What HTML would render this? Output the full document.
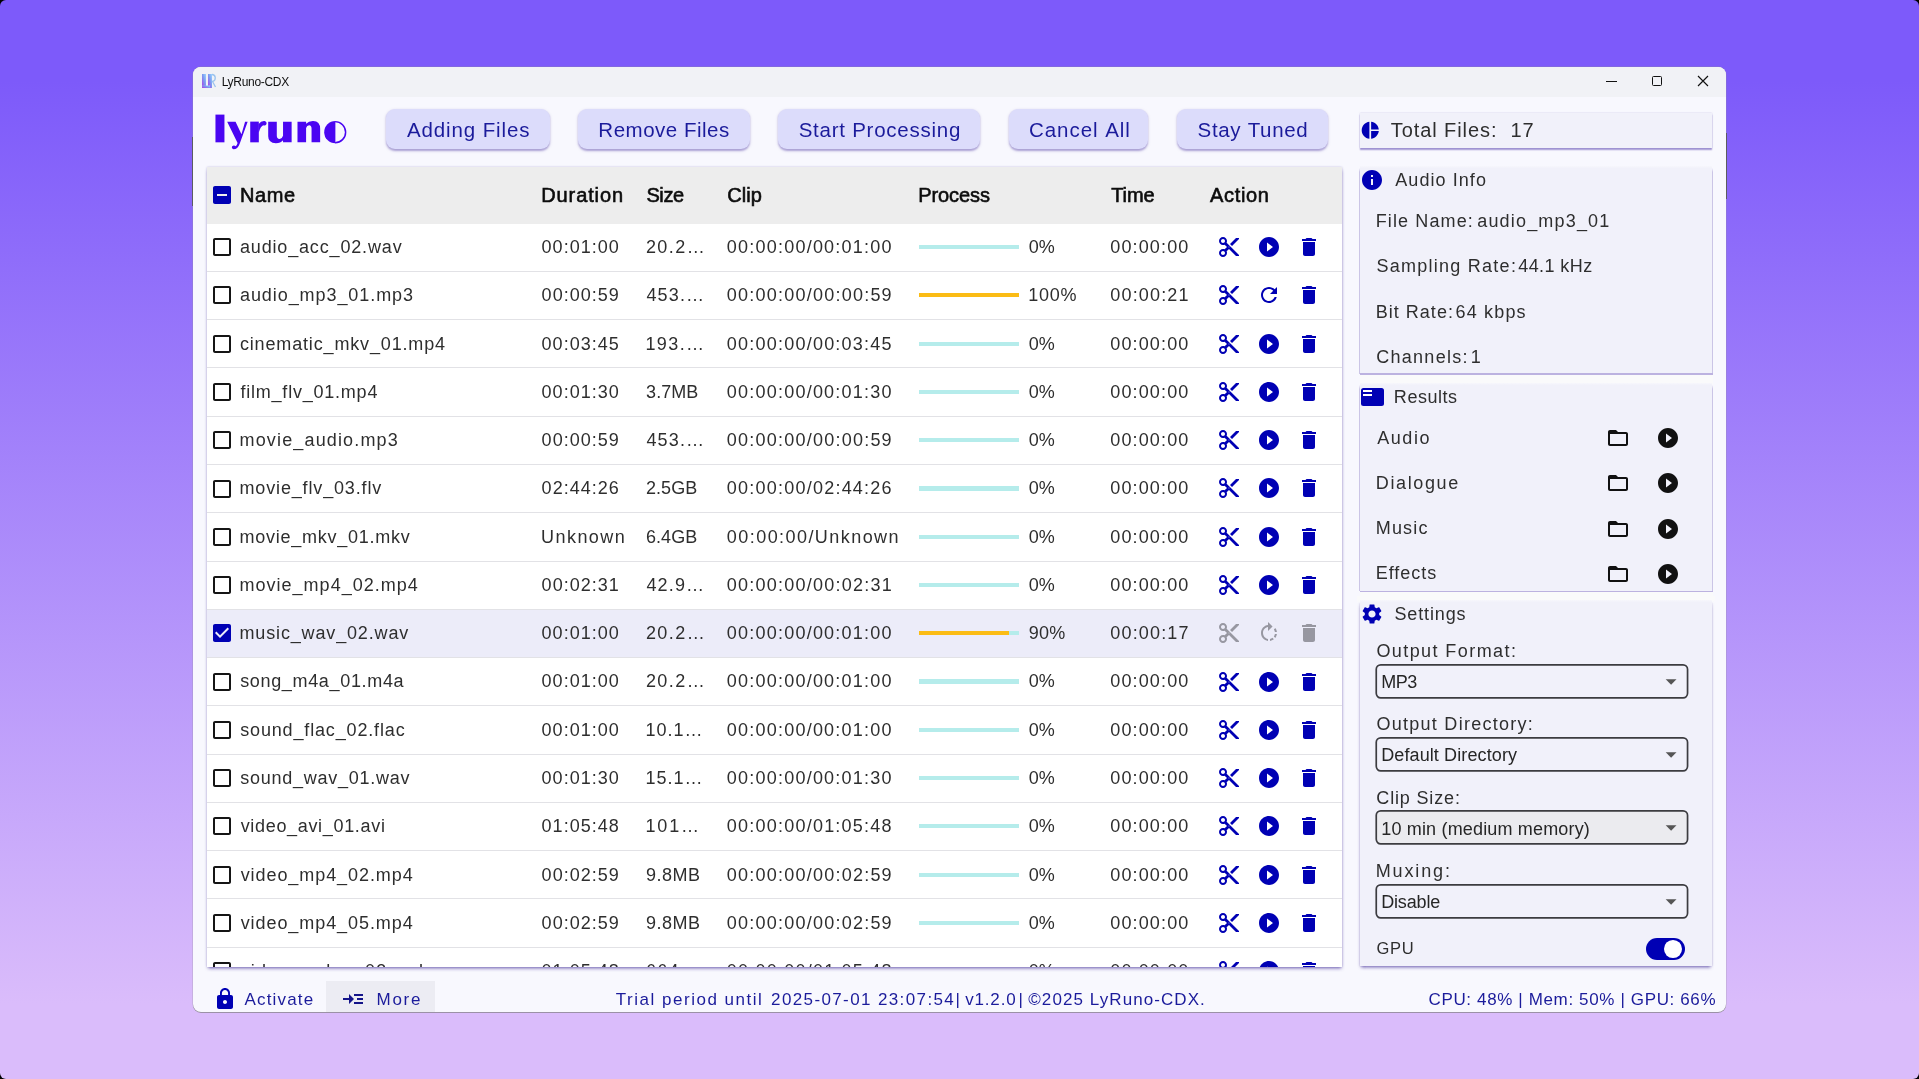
<!DOCTYPE html>
<html><head><meta charset="utf-8"><title>LyRuno-CDX</title>
<style>
html,body{margin:0;padding:0;background:#000;}
body{width:1919px;height:1079px;overflow:hidden;position:relative;font-family:"Liberation Sans",sans-serif;}
#bg{position:absolute;left:0;top:0;width:1919px;height:1079px;border-radius:6px;
background:linear-gradient(180deg,#7d5afa 0%,#7d5afa 7.5%,#dabcfb 93%,#dabcfb 100%);}
#win{position:absolute;background:#f8f8fe;border-radius:8px;box-shadow:0 0.8px 0 0 rgba(120,120,120,.75),0 0 0 0.5px rgba(150,150,150,.5);}
#tbl{position:absolute;background:#fff;overflow:hidden;box-shadow:0 2px 3.5px -0.5px rgba(80,60,160,.78),0 0 2px rgba(140,130,190,.38);}
.t{position:absolute;white-space:nowrap;}
.b{position:absolute;}
.i{position:absolute;display:block;}
#root{position:absolute;left:0;top:0;width:1919px;height:1079px;will-change:transform;}
</style></head><body><div id="bg"></div><div id="root">
<div id="win" style="left:193px;top:67px;width:1533px;height:945px"></div>
<div class="b" style="left:193.00px;top:67.00px;width:1533.00px;height:30.00px;background:#f1f2f6;border-radius:8px 8px 0 0;"></div>
<div class="b" style="left:1725.60px;top:133.30px;width:1.00px;height:66.00px;background:#5c5c60;"></div>
<div class="b" style="left:192.40px;top:136.70px;width:1.00px;height:69.00px;background:#5c5c60;"></div>
<svg class="i" style="left:201px;top:73px" width="16" height="16" viewBox="0 0 16 16">
<defs><linearGradient id="lg" x1="0" y1="1" x2="1" y2="0"><stop offset="0" stop-color="#b238e8"/><stop offset="0.55" stop-color="#7c9cf0"/><stop offset="1" stop-color="#9fd8ff"/></linearGradient></defs>
<rect x="1" y="1" width="4" height="14" fill="url(#lg)"/><rect x="7" y="1" width="4" height="14" fill="url(#lg)"/><rect x="1" y="12.5" width="8" height="2.500" fill="url(#lg)"/>
<path d="M11 1.5c4 0 4.500 6 0.500 7l3 5.500" stroke="#9cc4ee" stroke-width="1.300" fill="none"/></svg>
<div class="t" style="left:221.64px;top:76.00px;font-size:12px;line-height:12px;color:#111;letter-spacing:-0.296px;">LyRuno-CDX</div>
<div class="b" style="left:1606.00px;top:81.00px;width:11.00px;height:1.00px;background:#111;"></div>
<div class="b" style="left:1651.50px;top:75.70px;width:10.00px;height:10.00px;border:1.2px solid #111;border-radius:1.5px;box-sizing:border-box;"></div>
<svg class="i" style="left:1697px;top:75px" width="12" height="12" viewBox="0 0 12 12"><path d="M1 1L11 11M11 1L1 11" stroke="#111" stroke-width="1.15" fill="none"/></svg>
<svg class="i" style="left:208px;top:106px" width="150" height="50" viewBox="0 0 1919 640">
<g fill="#4a05f2">
<path d="M95 110H210V465H95Z"/>
<path d="M245 200H352L428 360L474 200H507L405 482Q380 554 326 554Q296 543 309 515Q332 497 355 516Q369 504 378 474Z"/>
<path d="M540 200H650V465H540Z"/>
<path d="M645 232Q680 189 723 193Q757 204 747 235Q732 257 706 247Q672 263 651 335L645 335Z"/>
<path d="M770 200H880V378Q880 422 916 422Q950 416 960 380V200H1070V465H960V438Q930 476 868 476Q770 474 770 388Z"/>
<path d="M1145 200H1255V228Q1290 190 1346 192Q1435 196 1435 292V465H1325V292Q1325 246 1294 246Q1265 250 1255 282V465H1145Z"/>
<path d="M1630 192A143 143 0 0 0 1630 478Z"/>
</g>
<path d="M1626 200A135 135 0 0 1 1626 470" stroke="#4a05f2" stroke-width="19" fill="none"/>
</svg>
<div class="b" style="left:385.60px;top:109.40px;width:164.70px;height:39.80px;background:#dcdcfb;border-radius:9px;box-shadow:0 1.5px 2.2px rgba(90,70,170,.5);"></div>
<div class="t" style="left:407.00px;top:120.00px;font-size:20.5px;line-height:20.5px;color:#1b1b9b;letter-spacing:0.874px;">Adding&nbsp;Files</div>
<div class="b" style="left:578.40px;top:109.40px;width:171.70px;height:39.80px;background:#dcdcfb;border-radius:9px;box-shadow:0 1.5px 2.2px rgba(90,70,170,.5);"></div>
<div class="t" style="left:598.36px;top:120.00px;font-size:20.5px;line-height:20.5px;color:#1b1b9b;letter-spacing:0.505px;">Remove&nbsp;Files</div>
<div class="b" style="left:778.30px;top:109.40px;width:202.00px;height:39.80px;background:#dcdcfb;border-radius:9px;box-shadow:0 1.5px 2.2px rgba(90,70,170,.5);"></div>
<div class="t" style="left:798.68px;top:120.00px;font-size:20.5px;line-height:20.5px;color:#1b1b9b;letter-spacing:0.749px;">Start&nbsp;Processing</div>
<div class="b" style="left:1008.60px;top:109.40px;width:139.90px;height:39.80px;background:#dcdcfb;border-radius:9px;box-shadow:0 1.5px 2.2px rgba(90,70,170,.5);"></div>
<div class="t" style="left:1028.97px;top:120.00px;font-size:20.5px;line-height:20.5px;color:#1b1b9b;letter-spacing:0.954px;">Cancel&nbsp;All</div>
<div class="b" style="left:1176.70px;top:109.40px;width:151.30px;height:39.80px;background:#dcdcfb;border-radius:9px;box-shadow:0 1.5px 2.2px rgba(90,70,170,.5);"></div>
<div class="t" style="left:1197.58px;top:120.00px;font-size:20.5px;line-height:20.5px;color:#1b1b9b;letter-spacing:0.669px;">Stay&nbsp;Tuned</div>
<div id="tbl" style="left:207px;top:167px;width:1135px;height:799.6px">
<div style="position:absolute;left:-207px;top:-167px;width:1919px;height:1079px">
<div class="b" style="left:207.00px;top:167.00px;width:1135.00px;height:56.70px;background:#ededed;"></div>
<svg class="i" style="left:210.40px;top:182.70px" width="24" height="24" viewBox="0 0 24 24"><path fill="#0000b4" d="M19 3H5c-1.1 0-2 .9-2 2v14c0 1.1.9 2 2 2h14c1.1 0 2-.9 2-2V5c0-1.1-.9-2-2-2zm-2 10H7v-2h10v2z"/></svg>
<div class="t" style="left:239.90px;top:185.00px;font-size:20px;line-height:20px;color:#0c0c0c;letter-spacing:0.667px;-webkit-text-stroke:0.6px #0c0c0c;">Name</div>
<div class="t" style="left:541.30px;top:185.00px;font-size:20px;line-height:20px;color:#0c0c0c;letter-spacing:0.879px;-webkit-text-stroke:0.6px #0c0c0c;">Duration</div>
<div class="t" style="left:646.40px;top:185.00px;font-size:20px;line-height:20px;color:#0c0c0c;letter-spacing:-0.383px;-webkit-text-stroke:0.6px #0c0c0c;">Size</div>
<div class="t" style="left:727.20px;top:185.00px;font-size:20px;line-height:20px;color:#0c0c0c;letter-spacing:0.117px;-webkit-text-stroke:0.6px #0c0c0c;">Clip</div>
<div class="t" style="left:918.30px;top:185.00px;font-size:20px;line-height:20px;color:#0c0c0c;letter-spacing:-0.108px;-webkit-text-stroke:0.6px #0c0c0c;">Process</div>
<div class="t" style="left:1111.20px;top:185.00px;font-size:20px;line-height:20px;color:#0c0c0c;letter-spacing:-0.050px;-webkit-text-stroke:0.6px #0c0c0c;">Time</div>
<div class="t" style="left:1209.90px;top:185.00px;font-size:20px;line-height:20px;color:#0c0c0c;letter-spacing:0.700px;-webkit-text-stroke:0.6px #0c0c0c;">Action</div>
<div class="b" style="left:207.00px;top:270.95px;width:1135.00px;height:1.00px;background:#e2e2e6;"></div>
<svg class="i" style="left:210.30px;top:235.20px" width="24" height="24" viewBox="0 0 24 24"><path fill="#151515" d="M19 5v14H5V5h14m0-2H5c-1.1 0-2 .9-2 2v14c0 1.1.9 2 2 2h14c1.1 0 2-.9 2-2V5c0-1.1-.9-2-2-2z"/></svg>
<div class="t" style="left:239.94px;top:238.00px;font-size:18px;line-height:18px;color:#2e2e2e;letter-spacing:0.839px;">audio_acc_02.wav</div>
<div class="t" style="left:541.62px;top:238.00px;font-size:18px;line-height:18px;color:#2e2e2e;letter-spacing:0.998px;">00:01:00</div>
<div class="t" style="left:645.90px;top:238.00px;font-size:18px;line-height:18px;color:#2e2e2e;letter-spacing:1.469px;">20.2…</div>
<div class="t" style="left:726.83px;top:238.00px;font-size:18px;line-height:18px;color:#2e2e2e;letter-spacing:1.220px;">00:00:00/00:01:00</div>
<div class="b" style="left:919.00px;top:245.00px;width:100.00px;height:4.20px;background:#b5eceb;"></div>
<div class="t" style="left:1028.83px;top:238.00px;font-size:18px;line-height:18px;color:#2e2e2e;letter-spacing:-0.105px;">0%</div>
<div class="t" style="left:1110.33px;top:238.00px;font-size:18px;line-height:18px;color:#2e2e2e;letter-spacing:1.126px;">00:00:00</div>
<svg class="i" style="left:1217.00px;top:235.10px" width="24" height="24" viewBox="0 0 24 24"><path fill="#0000b4" d="M9.64 7.64c.23-.5.36-1.05.36-1.64 0-2.21-1.79-4-4-4S2 3.79 2 6s1.79 4 4 4c.59 0 1.14-.13 1.64-.36L10 12l-2.36 2.36C7.14 14.13 6.59 14 6 14c-2.21 0-4 1.79-4 4s1.79 4 4 4 4-1.79 4-4c0-.59-.13-1.14-.36-1.64L12 14l7 7h3v-1L9.64 7.64zM6 8c-1.1 0-2-.89-2-2s.9-2 2-2 2 .89 2 2-.9 2-2 2zm0 12c-1.1 0-2-.89-2-2s.9-2 2-2 2 .89 2 2-.9 2-2 2zm6-7.5c-.28 0-.5-.22-.5-.5s.22-.5.5-.5.5.22.5.5-.22.5-.5.5zM19 3l-6 6 2 2 7-7V3z"/></svg>
<svg class="i" style="left:1257.00px;top:235.10px" width="24" height="24" viewBox="0 0 24 24"><path fill="#0000b4" d="M12 2C6.48 2 2 6.48 2 12s4.48 10 10 10 10-4.48 10-10S17.52 2 12 2zm-2 14.5v-9l6 4.5-6 4.5z"/></svg>
<svg class="i" style="left:1297.20px;top:235.10px" width="24" height="24" viewBox="0 0 24 24"><path fill="#0000b4" d="M6 19c0 1.1.9 2 2 2h8c1.1 0 2-.9 2-2V7H6v12zM19 4h-3.5l-1-1h-5l-1 1H5v2h14V4z"/></svg>
<div class="b" style="left:207.00px;top:319.22px;width:1135.00px;height:1.00px;background:#e2e2e6;"></div>
<svg class="i" style="left:210.30px;top:283.47px" width="24" height="24" viewBox="0 0 24 24"><path fill="#151515" d="M19 5v14H5V5h14m0-2H5c-1.1 0-2 .9-2 2v14c0 1.1.9 2 2 2h14c1.1 0 2-.9 2-2V5c0-1.1-.9-2-2-2z"/></svg>
<div class="t" style="left:239.94px;top:286.00px;font-size:18px;line-height:18px;color:#2e2e2e;letter-spacing:0.934px;">audio_mp3_01.mp3</div>
<div class="t" style="left:541.62px;top:286.00px;font-size:18px;line-height:18px;color:#2e2e2e;letter-spacing:1.017px;">00:00:59</div>
<div class="t" style="left:646.39px;top:286.00px;font-size:18px;line-height:18px;color:#2e2e2e;letter-spacing:1.170px;">453.…</div>
<div class="t" style="left:726.83px;top:286.00px;font-size:18px;line-height:18px;color:#2e2e2e;letter-spacing:1.229px;">00:00:00/00:00:59</div>
<div class="b" style="left:919.00px;top:293.27px;width:100.00px;height:4.20px;background:#b5eceb;"></div>
<div class="b" style="left:919.00px;top:293.27px;width:100.00px;height:4.20px;background:#fbbc15;"></div>
<div class="t" style="left:1028.15px;top:286.00px;font-size:18px;line-height:18px;color:#2e2e2e;letter-spacing:0.748px;">100%</div>
<div class="t" style="left:1110.33px;top:286.00px;font-size:18px;line-height:18px;color:#2e2e2e;letter-spacing:1.152px;">00:00:21</div>
<svg class="i" style="left:1217.00px;top:283.37px" width="24" height="24" viewBox="0 0 24 24"><path fill="#0000b4" d="M9.64 7.64c.23-.5.36-1.05.36-1.64 0-2.21-1.79-4-4-4S2 3.79 2 6s1.79 4 4 4c.59 0 1.14-.13 1.64-.36L10 12l-2.36 2.36C7.14 14.13 6.59 14 6 14c-2.21 0-4 1.79-4 4s1.79 4 4 4 4-1.79 4-4c0-.59-.13-1.14-.36-1.64L12 14l7 7h3v-1L9.64 7.64zM6 8c-1.1 0-2-.89-2-2s.9-2 2-2 2 .89 2 2-.9 2-2 2zm0 12c-1.1 0-2-.89-2-2s.9-2 2-2 2 .89 2 2-.9 2-2 2zm6-7.5c-.28 0-.5-.22-.5-.5s.22-.5.5-.5.5.22.5.5-.22.5-.5.5zM19 3l-6 6 2 2 7-7V3z"/></svg>
<svg class="i" style="left:1257.00px;top:283.37px" width="24" height="24" viewBox="0 0 24 24"><path fill="#0000b4" d="M17.65 6.35C16.2 4.9 14.21 4 12 4c-4.42 0-7.99 3.58-7.99 8s3.57 8 7.99 8c3.73 0 6.84-2.55 7.73-6h-2.08c-.82 2.33-3.04 4-5.65 4-3.31 0-6-2.69-6-6s2.69-6 6-6c1.66 0 3.14.69 4.22 1.78L13 11h7V4l-2.35 2.35z"/></svg>
<svg class="i" style="left:1297.20px;top:283.37px" width="24" height="24" viewBox="0 0 24 24"><path fill="#0000b4" d="M6 19c0 1.1.9 2 2 2h8c1.1 0 2-.9 2-2V7H6v12zM19 4h-3.5l-1-1h-5l-1 1H5v2h14V4z"/></svg>
<div class="b" style="left:207.00px;top:367.49px;width:1135.00px;height:1.00px;background:#e2e2e6;"></div>
<svg class="i" style="left:210.30px;top:331.74px" width="24" height="24" viewBox="0 0 24 24"><path fill="#151515" d="M19 5v14H5V5h14m0-2H5c-1.1 0-2 .9-2 2v14c0 1.1.9 2 2 2h14c1.1 0 2-.9 2-2V5c0-1.1-.9-2-2-2z"/></svg>
<div class="t" style="left:239.94px;top:335.00px;font-size:18px;line-height:18px;color:#2e2e2e;letter-spacing:0.843px;">cinematic_mkv_01.mp4</div>
<div class="t" style="left:541.62px;top:335.00px;font-size:18px;line-height:18px;color:#2e2e2e;letter-spacing:1.004px;">00:03:45</div>
<div class="t" style="left:645.45px;top:335.00px;font-size:18px;line-height:18px;color:#2e2e2e;letter-spacing:1.406px;">193.…</div>
<div class="t" style="left:726.83px;top:335.00px;font-size:18px;line-height:18px;color:#2e2e2e;letter-spacing:1.223px;">00:00:00/00:03:45</div>
<div class="b" style="left:919.00px;top:341.54px;width:100.00px;height:4.20px;background:#b5eceb;"></div>
<div class="t" style="left:1028.83px;top:335.00px;font-size:18px;line-height:18px;color:#2e2e2e;letter-spacing:-0.105px;">0%</div>
<div class="t" style="left:1110.33px;top:335.00px;font-size:18px;line-height:18px;color:#2e2e2e;letter-spacing:1.126px;">00:00:00</div>
<svg class="i" style="left:1217.00px;top:331.64px" width="24" height="24" viewBox="0 0 24 24"><path fill="#0000b4" d="M9.64 7.64c.23-.5.36-1.05.36-1.64 0-2.21-1.79-4-4-4S2 3.79 2 6s1.79 4 4 4c.59 0 1.14-.13 1.64-.36L10 12l-2.36 2.36C7.14 14.13 6.59 14 6 14c-2.21 0-4 1.79-4 4s1.79 4 4 4 4-1.79 4-4c0-.59-.13-1.14-.36-1.64L12 14l7 7h3v-1L9.64 7.64zM6 8c-1.1 0-2-.89-2-2s.9-2 2-2 2 .89 2 2-.9 2-2 2zm0 12c-1.1 0-2-.89-2-2s.9-2 2-2 2 .89 2 2-.9 2-2 2zm6-7.5c-.28 0-.5-.22-.5-.5s.22-.5.5-.5.5.22.5.5-.22.5-.5.5zM19 3l-6 6 2 2 7-7V3z"/></svg>
<svg class="i" style="left:1257.00px;top:331.64px" width="24" height="24" viewBox="0 0 24 24"><path fill="#0000b4" d="M12 2C6.48 2 2 6.48 2 12s4.48 10 10 10 10-4.48 10-10S17.52 2 12 2zm-2 14.5v-9l6 4.5-6 4.5z"/></svg>
<svg class="i" style="left:1297.20px;top:331.64px" width="24" height="24" viewBox="0 0 24 24"><path fill="#0000b4" d="M6 19c0 1.1.9 2 2 2h8c1.1 0 2-.9 2-2V7H6v12zM19 4h-3.5l-1-1h-5l-1 1H5v2h14V4z"/></svg>
<div class="b" style="left:207.00px;top:415.76px;width:1135.00px;height:1.00px;background:#e2e2e6;"></div>
<svg class="i" style="left:210.30px;top:380.01px" width="24" height="24" viewBox="0 0 24 24"><path fill="#151515" d="M19 5v14H5V5h14m0-2H5c-1.1 0-2 .9-2 2v14c0 1.1.9 2 2 2h14c1.1 0 2-.9 2-2V5c0-1.1-.9-2-2-2z"/></svg>
<div class="t" style="left:240.47px;top:383.00px;font-size:18px;line-height:18px;color:#2e2e2e;letter-spacing:0.777px;">film_flv_01.mp4</div>
<div class="t" style="left:541.62px;top:383.00px;font-size:18px;line-height:18px;color:#2e2e2e;letter-spacing:0.998px;">00:01:30</div>
<div class="t" style="left:646.12px;top:383.00px;font-size:18px;line-height:18px;color:#2e2e2e;letter-spacing:0.050px;">3.7MB</div>
<div class="t" style="left:726.83px;top:383.00px;font-size:18px;line-height:18px;color:#2e2e2e;letter-spacing:1.220px;">00:00:00/00:01:30</div>
<div class="b" style="left:919.00px;top:389.81px;width:100.00px;height:4.20px;background:#b5eceb;"></div>
<div class="t" style="left:1028.83px;top:383.00px;font-size:18px;line-height:18px;color:#2e2e2e;letter-spacing:-0.105px;">0%</div>
<div class="t" style="left:1110.33px;top:383.00px;font-size:18px;line-height:18px;color:#2e2e2e;letter-spacing:1.126px;">00:00:00</div>
<svg class="i" style="left:1217.00px;top:379.91px" width="24" height="24" viewBox="0 0 24 24"><path fill="#0000b4" d="M9.64 7.64c.23-.5.36-1.05.36-1.64 0-2.21-1.79-4-4-4S2 3.79 2 6s1.79 4 4 4c.59 0 1.14-.13 1.64-.36L10 12l-2.36 2.36C7.14 14.13 6.59 14 6 14c-2.21 0-4 1.79-4 4s1.79 4 4 4 4-1.79 4-4c0-.59-.13-1.14-.36-1.64L12 14l7 7h3v-1L9.64 7.64zM6 8c-1.1 0-2-.89-2-2s.9-2 2-2 2 .89 2 2-.9 2-2 2zm0 12c-1.1 0-2-.89-2-2s.9-2 2-2 2 .89 2 2-.9 2-2 2zm6-7.5c-.28 0-.5-.22-.5-.5s.22-.5.5-.5.5.22.5.5-.22.5-.5.5zM19 3l-6 6 2 2 7-7V3z"/></svg>
<svg class="i" style="left:1257.00px;top:379.91px" width="24" height="24" viewBox="0 0 24 24"><path fill="#0000b4" d="M12 2C6.48 2 2 6.48 2 12s4.48 10 10 10 10-4.48 10-10S17.52 2 12 2zm-2 14.5v-9l6 4.5-6 4.5z"/></svg>
<svg class="i" style="left:1297.20px;top:379.91px" width="24" height="24" viewBox="0 0 24 24"><path fill="#0000b4" d="M6 19c0 1.1.9 2 2 2h8c1.1 0 2-.9 2-2V7H6v12zM19 4h-3.5l-1-1h-5l-1 1H5v2h14V4z"/></svg>
<div class="b" style="left:207.00px;top:464.03px;width:1135.00px;height:1.00px;background:#e2e2e6;"></div>
<svg class="i" style="left:210.30px;top:428.28px" width="24" height="24" viewBox="0 0 24 24"><path fill="#151515" d="M19 5v14H5V5h14m0-2H5c-1.1 0-2 .9-2 2v14c0 1.1.9 2 2 2h14c1.1 0 2-.9 2-2V5c0-1.1-.9-2-2-2z"/></svg>
<div class="t" style="left:239.53px;top:431.00px;font-size:18px;line-height:18px;color:#2e2e2e;letter-spacing:1.155px;">movie_audio.mp3</div>
<div class="t" style="left:541.62px;top:431.00px;font-size:18px;line-height:18px;color:#2e2e2e;letter-spacing:1.017px;">00:00:59</div>
<div class="t" style="left:646.39px;top:431.00px;font-size:18px;line-height:18px;color:#2e2e2e;letter-spacing:1.170px;">453.…</div>
<div class="t" style="left:726.83px;top:431.00px;font-size:18px;line-height:18px;color:#2e2e2e;letter-spacing:1.229px;">00:00:00/00:00:59</div>
<div class="b" style="left:919.00px;top:438.08px;width:100.00px;height:4.20px;background:#b5eceb;"></div>
<div class="t" style="left:1028.83px;top:431.00px;font-size:18px;line-height:18px;color:#2e2e2e;letter-spacing:-0.105px;">0%</div>
<div class="t" style="left:1110.33px;top:431.00px;font-size:18px;line-height:18px;color:#2e2e2e;letter-spacing:1.126px;">00:00:00</div>
<svg class="i" style="left:1217.00px;top:428.18px" width="24" height="24" viewBox="0 0 24 24"><path fill="#0000b4" d="M9.64 7.64c.23-.5.36-1.05.36-1.64 0-2.21-1.79-4-4-4S2 3.79 2 6s1.79 4 4 4c.59 0 1.14-.13 1.64-.36L10 12l-2.36 2.36C7.14 14.13 6.59 14 6 14c-2.21 0-4 1.79-4 4s1.79 4 4 4 4-1.79 4-4c0-.59-.13-1.14-.36-1.64L12 14l7 7h3v-1L9.64 7.64zM6 8c-1.1 0-2-.89-2-2s.9-2 2-2 2 .89 2 2-.9 2-2 2zm0 12c-1.1 0-2-.89-2-2s.9-2 2-2 2 .89 2 2-.9 2-2 2zm6-7.5c-.28 0-.5-.22-.5-.5s.22-.5.5-.5.5.22.5.5-.22.5-.5.5zM19 3l-6 6 2 2 7-7V3z"/></svg>
<svg class="i" style="left:1257.00px;top:428.18px" width="24" height="24" viewBox="0 0 24 24"><path fill="#0000b4" d="M12 2C6.48 2 2 6.48 2 12s4.48 10 10 10 10-4.48 10-10S17.52 2 12 2zm-2 14.5v-9l6 4.5-6 4.5z"/></svg>
<svg class="i" style="left:1297.20px;top:428.18px" width="24" height="24" viewBox="0 0 24 24"><path fill="#0000b4" d="M6 19c0 1.1.9 2 2 2h8c1.1 0 2-.9 2-2V7H6v12zM19 4h-3.5l-1-1h-5l-1 1H5v2h14V4z"/></svg>
<div class="b" style="left:207.00px;top:512.30px;width:1135.00px;height:1.00px;background:#e2e2e6;"></div>
<svg class="i" style="left:210.30px;top:476.55px" width="24" height="24" viewBox="0 0 24 24"><path fill="#151515" d="M19 5v14H5V5h14m0-2H5c-1.1 0-2 .9-2 2v14c0 1.1.9 2 2 2h14c1.1 0 2-.9 2-2V5c0-1.1-.9-2-2-2z"/></svg>
<div class="t" style="left:239.53px;top:479.00px;font-size:18px;line-height:18px;color:#2e2e2e;letter-spacing:0.844px;">movie_flv_03.flv</div>
<div class="t" style="left:541.62px;top:479.00px;font-size:18px;line-height:18px;color:#2e2e2e;letter-spacing:1.011px;">02:44:26</div>
<div class="t" style="left:645.90px;top:479.00px;font-size:18px;line-height:18px;color:#2e2e2e;letter-spacing:0.104px;">2.5GB</div>
<div class="t" style="left:726.83px;top:479.00px;font-size:18px;line-height:18px;color:#2e2e2e;letter-spacing:1.226px;">00:00:00/02:44:26</div>
<div class="b" style="left:919.00px;top:486.35px;width:100.00px;height:4.20px;background:#b5eceb;"></div>
<div class="t" style="left:1028.83px;top:479.00px;font-size:18px;line-height:18px;color:#2e2e2e;letter-spacing:-0.105px;">0%</div>
<div class="t" style="left:1110.33px;top:479.00px;font-size:18px;line-height:18px;color:#2e2e2e;letter-spacing:1.126px;">00:00:00</div>
<svg class="i" style="left:1217.00px;top:476.45px" width="24" height="24" viewBox="0 0 24 24"><path fill="#0000b4" d="M9.64 7.64c.23-.5.36-1.05.36-1.64 0-2.21-1.79-4-4-4S2 3.79 2 6s1.79 4 4 4c.59 0 1.14-.13 1.64-.36L10 12l-2.36 2.36C7.14 14.13 6.59 14 6 14c-2.21 0-4 1.79-4 4s1.79 4 4 4 4-1.79 4-4c0-.59-.13-1.14-.36-1.64L12 14l7 7h3v-1L9.64 7.64zM6 8c-1.1 0-2-.89-2-2s.9-2 2-2 2 .89 2 2-.9 2-2 2zm0 12c-1.1 0-2-.89-2-2s.9-2 2-2 2 .89 2 2-.9 2-2 2zm6-7.5c-.28 0-.5-.22-.5-.5s.22-.5.5-.5.5.22.5.5-.22.5-.5.5zM19 3l-6 6 2 2 7-7V3z"/></svg>
<svg class="i" style="left:1257.00px;top:476.45px" width="24" height="24" viewBox="0 0 24 24"><path fill="#0000b4" d="M12 2C6.48 2 2 6.48 2 12s4.48 10 10 10 10-4.48 10-10S17.52 2 12 2zm-2 14.5v-9l6 4.5-6 4.5z"/></svg>
<svg class="i" style="left:1297.20px;top:476.45px" width="24" height="24" viewBox="0 0 24 24"><path fill="#0000b4" d="M6 19c0 1.1.9 2 2 2h8c1.1 0 2-.9 2-2V7H6v12zM19 4h-3.5l-1-1h-5l-1 1H5v2h14V4z"/></svg>
<div class="b" style="left:207.00px;top:560.57px;width:1135.00px;height:1.00px;background:#e2e2e6;"></div>
<svg class="i" style="left:210.30px;top:524.82px" width="24" height="24" viewBox="0 0 24 24"><path fill="#151515" d="M19 5v14H5V5h14m0-2H5c-1.1 0-2 .9-2 2v14c0 1.1.9 2 2 2h14c1.1 0 2-.9 2-2V5c0-1.1-.9-2-2-2z"/></svg>
<div class="t" style="left:239.53px;top:528.00px;font-size:18px;line-height:18px;color:#2e2e2e;letter-spacing:0.752px;">movie_mkv_01.mkv</div>
<div class="t" style="left:540.95px;top:528.00px;font-size:18px;line-height:18px;color:#2e2e2e;letter-spacing:1.477px;">Unknown</div>
<div class="t" style="left:645.90px;top:528.00px;font-size:18px;line-height:18px;color:#2e2e2e;letter-spacing:0.104px;">6.4GB</div>
<div class="t" style="left:726.83px;top:528.00px;font-size:18px;line-height:18px;color:#2e2e2e;letter-spacing:1.442px;">00:00:00/Unknown</div>
<div class="b" style="left:919.00px;top:534.62px;width:100.00px;height:4.20px;background:#b5eceb;"></div>
<div class="t" style="left:1028.83px;top:528.00px;font-size:18px;line-height:18px;color:#2e2e2e;letter-spacing:-0.105px;">0%</div>
<div class="t" style="left:1110.33px;top:528.00px;font-size:18px;line-height:18px;color:#2e2e2e;letter-spacing:1.126px;">00:00:00</div>
<svg class="i" style="left:1217.00px;top:524.72px" width="24" height="24" viewBox="0 0 24 24"><path fill="#0000b4" d="M9.64 7.64c.23-.5.36-1.05.36-1.64 0-2.21-1.79-4-4-4S2 3.79 2 6s1.79 4 4 4c.59 0 1.14-.13 1.64-.36L10 12l-2.36 2.36C7.14 14.13 6.59 14 6 14c-2.21 0-4 1.79-4 4s1.79 4 4 4 4-1.79 4-4c0-.59-.13-1.14-.36-1.64L12 14l7 7h3v-1L9.64 7.64zM6 8c-1.1 0-2-.89-2-2s.9-2 2-2 2 .89 2 2-.9 2-2 2zm0 12c-1.1 0-2-.89-2-2s.9-2 2-2 2 .89 2 2-.9 2-2 2zm6-7.5c-.28 0-.5-.22-.5-.5s.22-.5.5-.5.5.22.5.5-.22.5-.5.5zM19 3l-6 6 2 2 7-7V3z"/></svg>
<svg class="i" style="left:1257.00px;top:524.72px" width="24" height="24" viewBox="0 0 24 24"><path fill="#0000b4" d="M12 2C6.48 2 2 6.48 2 12s4.48 10 10 10 10-4.48 10-10S17.52 2 12 2zm-2 14.5v-9l6 4.5-6 4.5z"/></svg>
<svg class="i" style="left:1297.20px;top:524.72px" width="24" height="24" viewBox="0 0 24 24"><path fill="#0000b4" d="M6 19c0 1.1.9 2 2 2h8c1.1 0 2-.9 2-2V7H6v12zM19 4h-3.5l-1-1h-5l-1 1H5v2h14V4z"/></svg>
<div class="b" style="left:207.00px;top:608.84px;width:1135.00px;height:1.00px;background:#e2e2e6;"></div>
<svg class="i" style="left:210.30px;top:573.09px" width="24" height="24" viewBox="0 0 24 24"><path fill="#151515" d="M19 5v14H5V5h14m0-2H5c-1.1 0-2 .9-2 2v14c0 1.1.9 2 2 2h14c1.1 0 2-.9 2-2V5c0-1.1-.9-2-2-2z"/></svg>
<div class="t" style="left:239.53px;top:576.00px;font-size:18px;line-height:18px;color:#2e2e2e;letter-spacing:1.012px;">movie_mp4_02.mp4</div>
<div class="t" style="left:541.62px;top:576.00px;font-size:18px;line-height:18px;color:#2e2e2e;letter-spacing:1.024px;">00:02:31</div>
<div class="t" style="left:646.39px;top:576.00px;font-size:18px;line-height:18px;color:#2e2e2e;letter-spacing:1.170px;">42.9…</div>
<div class="t" style="left:726.83px;top:576.00px;font-size:18px;line-height:18px;color:#2e2e2e;letter-spacing:1.232px;">00:00:00/00:02:31</div>
<div class="b" style="left:919.00px;top:582.89px;width:100.00px;height:4.20px;background:#b5eceb;"></div>
<div class="t" style="left:1028.83px;top:576.00px;font-size:18px;line-height:18px;color:#2e2e2e;letter-spacing:-0.105px;">0%</div>
<div class="t" style="left:1110.33px;top:576.00px;font-size:18px;line-height:18px;color:#2e2e2e;letter-spacing:1.126px;">00:00:00</div>
<svg class="i" style="left:1217.00px;top:572.99px" width="24" height="24" viewBox="0 0 24 24"><path fill="#0000b4" d="M9.64 7.64c.23-.5.36-1.05.36-1.64 0-2.21-1.79-4-4-4S2 3.79 2 6s1.79 4 4 4c.59 0 1.14-.13 1.64-.36L10 12l-2.36 2.36C7.14 14.13 6.59 14 6 14c-2.21 0-4 1.79-4 4s1.79 4 4 4 4-1.79 4-4c0-.59-.13-1.14-.36-1.64L12 14l7 7h3v-1L9.64 7.64zM6 8c-1.1 0-2-.89-2-2s.9-2 2-2 2 .89 2 2-.9 2-2 2zm0 12c-1.1 0-2-.89-2-2s.9-2 2-2 2 .89 2 2-.9 2-2 2zm6-7.5c-.28 0-.5-.22-.5-.5s.22-.5.5-.5.5.22.5.5-.22.5-.5.5zM19 3l-6 6 2 2 7-7V3z"/></svg>
<svg class="i" style="left:1257.00px;top:572.99px" width="24" height="24" viewBox="0 0 24 24"><path fill="#0000b4" d="M12 2C6.48 2 2 6.48 2 12s4.48 10 10 10 10-4.48 10-10S17.52 2 12 2zm-2 14.5v-9l6 4.5-6 4.5z"/></svg>
<svg class="i" style="left:1297.20px;top:572.99px" width="24" height="24" viewBox="0 0 24 24"><path fill="#0000b4" d="M6 19c0 1.1.9 2 2 2h8c1.1 0 2-.9 2-2V7H6v12zM19 4h-3.5l-1-1h-5l-1 1H5v2h14V4z"/></svg>
<div class="b" style="left:207.00px;top:609.86px;width:1135.00px;height:48.27px;background:#ececf9;"></div>
<div class="b" style="left:207.00px;top:657.11px;width:1135.00px;height:1.00px;background:#e2e2e6;"></div>
<svg class="i" style="left:210.30px;top:621.36px" width="24" height="24" viewBox="0 0 24 24"><path fill="#0000b4" d="M19 3H5c-1.11 0-2 .9-2 2v14c0 1.1.89 2 2 2h14c1.11 0 2-.9 2-2V5c0-1.1-.89-2-2-2zm-9 14l-5-5 1.41-1.41L10 14.17l7.59-7.59L19 8l-9 9z"/></svg>
<div class="t" style="left:239.53px;top:624.00px;font-size:18px;line-height:18px;color:#2e2e2e;letter-spacing:0.844px;">music_wav_02.wav</div>
<div class="t" style="left:541.62px;top:624.00px;font-size:18px;line-height:18px;color:#2e2e2e;letter-spacing:0.998px;">00:01:00</div>
<div class="t" style="left:645.90px;top:624.00px;font-size:18px;line-height:18px;color:#2e2e2e;letter-spacing:1.469px;">20.2…</div>
<div class="t" style="left:726.83px;top:624.00px;font-size:18px;line-height:18px;color:#2e2e2e;letter-spacing:1.220px;">00:00:00/00:01:00</div>
<div class="b" style="left:919.00px;top:631.16px;width:100.00px;height:4.20px;background:#b5eceb;"></div>
<div class="b" style="left:919.00px;top:631.16px;width:90.00px;height:4.20px;background:#fbbc15;"></div>
<div class="t" style="left:1028.69px;top:624.00px;font-size:18px;line-height:18px;color:#2e2e2e;letter-spacing:0.298px;">90%</div>
<div class="t" style="left:1110.33px;top:624.00px;font-size:18px;line-height:18px;color:#2e2e2e;letter-spacing:1.152px;">00:00:17</div>
<svg class="i" style="left:1217.00px;top:621.26px" width="24" height="24" viewBox="0 0 24 24"><path fill="#9797a1" d="M9.64 7.64c.23-.5.36-1.05.36-1.64 0-2.21-1.79-4-4-4S2 3.79 2 6s1.79 4 4 4c.59 0 1.14-.13 1.64-.36L10 12l-2.36 2.36C7.14 14.13 6.59 14 6 14c-2.21 0-4 1.79-4 4s1.79 4 4 4 4-1.79 4-4c0-.59-.13-1.14-.36-1.64L12 14l7 7h3v-1L9.64 7.64zM6 8c-1.1 0-2-.89-2-2s.9-2 2-2 2 .89 2 2-.9 2-2 2zm0 12c-1.1 0-2-.89-2-2s.9-2 2-2 2 .89 2 2-.9 2-2 2zm6-7.5c-.28 0-.5-.22-.5-.5s.22-.5.5-.5.5.22.5.5-.22.5-.5.5zM19 3l-6 6 2 2 7-7V3z"/></svg>
<svg class="i" style="left:1257.00px;top:621.26px" width="24" height="24" viewBox="0 0 24 24"><path fill="#9797a1" d="M16.89,15.5L18.31,16.89C19.21,15.73 19.76,14.39 19.93,13H17.91C17.77,13.87 17.43,14.72 16.89,15.5M13,17.9V19.92C14.39,19.75 15.74,19.21 16.9,18.31L15.46,16.87C14.71,17.41 13.87,17.76 13,17.9M19.93,11C19.76,9.61 19.21,8.27 18.31,7.11L16.89,8.53C17.43,9.28 17.77,10.13 17.91,11M15.55,5.55L11,1V4.07C7.06,4.56 4,7.92 4,12C4,16.08 7.05,19.44 11,19.93V17.91C8.16,17.43 6,14.97 6,12C6,9.03 8.16,6.57 11,6.09V10L15.55,5.55Z"/></svg>
<svg class="i" style="left:1297.20px;top:621.26px" width="24" height="24" viewBox="0 0 24 24"><path fill="#9797a1" d="M6 19c0 1.1.9 2 2 2h8c1.1 0 2-.9 2-2V7H6v12zM19 4h-3.5l-1-1h-5l-1 1H5v2h14V4z"/></svg>
<div class="b" style="left:207.00px;top:705.38px;width:1135.00px;height:1.00px;background:#e2e2e6;"></div>
<svg class="i" style="left:210.30px;top:669.63px" width="24" height="24" viewBox="0 0 24 24"><path fill="#151515" d="M19 5v14H5V5h14m0-2H5c-1.1 0-2 .9-2 2v14c0 1.1.9 2 2 2h14c1.1 0 2-.9 2-2V5c0-1.1-.9-2-2-2z"/></svg>
<div class="t" style="left:240.20px;top:672.00px;font-size:18px;line-height:18px;color:#2e2e2e;letter-spacing:0.662px;">song_m4a_01.m4a</div>
<div class="t" style="left:541.62px;top:672.00px;font-size:18px;line-height:18px;color:#2e2e2e;letter-spacing:0.998px;">00:01:00</div>
<div class="t" style="left:645.90px;top:672.00px;font-size:18px;line-height:18px;color:#2e2e2e;letter-spacing:1.469px;">20.2…</div>
<div class="t" style="left:726.83px;top:672.00px;font-size:18px;line-height:18px;color:#2e2e2e;letter-spacing:1.220px;">00:00:00/00:01:00</div>
<div class="b" style="left:919.00px;top:679.43px;width:100.00px;height:4.20px;background:#b5eceb;"></div>
<div class="t" style="left:1028.83px;top:672.00px;font-size:18px;line-height:18px;color:#2e2e2e;letter-spacing:-0.105px;">0%</div>
<div class="t" style="left:1110.33px;top:672.00px;font-size:18px;line-height:18px;color:#2e2e2e;letter-spacing:1.126px;">00:00:00</div>
<svg class="i" style="left:1217.00px;top:669.53px" width="24" height="24" viewBox="0 0 24 24"><path fill="#0000b4" d="M9.64 7.64c.23-.5.36-1.05.36-1.64 0-2.21-1.79-4-4-4S2 3.79 2 6s1.79 4 4 4c.59 0 1.14-.13 1.64-.36L10 12l-2.36 2.36C7.14 14.13 6.59 14 6 14c-2.21 0-4 1.79-4 4s1.79 4 4 4 4-1.79 4-4c0-.59-.13-1.14-.36-1.64L12 14l7 7h3v-1L9.64 7.64zM6 8c-1.1 0-2-.89-2-2s.9-2 2-2 2 .89 2 2-.9 2-2 2zm0 12c-1.1 0-2-.89-2-2s.9-2 2-2 2 .89 2 2-.9 2-2 2zm6-7.5c-.28 0-.5-.22-.5-.5s.22-.5.5-.5.5.22.5.5-.22.5-.5.5zM19 3l-6 6 2 2 7-7V3z"/></svg>
<svg class="i" style="left:1257.00px;top:669.53px" width="24" height="24" viewBox="0 0 24 24"><path fill="#0000b4" d="M12 2C6.48 2 2 6.48 2 12s4.48 10 10 10 10-4.48 10-10S17.52 2 12 2zm-2 14.5v-9l6 4.5-6 4.5z"/></svg>
<svg class="i" style="left:1297.20px;top:669.53px" width="24" height="24" viewBox="0 0 24 24"><path fill="#0000b4" d="M6 19c0 1.1.9 2 2 2h8c1.1 0 2-.9 2-2V7H6v12zM19 4h-3.5l-1-1h-5l-1 1H5v2h14V4z"/></svg>
<div class="b" style="left:207.00px;top:753.65px;width:1135.00px;height:1.00px;background:#e2e2e6;"></div>
<svg class="i" style="left:210.30px;top:717.90px" width="24" height="24" viewBox="0 0 24 24"><path fill="#151515" d="M19 5v14H5V5h14m0-2H5c-1.1 0-2 .9-2 2v14c0 1.1.9 2 2 2h14c1.1 0 2-.9 2-2V5c0-1.1-.9-2-2-2z"/></svg>
<div class="t" style="left:240.20px;top:721.00px;font-size:18px;line-height:18px;color:#2e2e2e;letter-spacing:0.843px;">sound_flac_02.flac</div>
<div class="t" style="left:541.62px;top:721.00px;font-size:18px;line-height:18px;color:#2e2e2e;letter-spacing:0.998px;">00:01:00</div>
<div class="t" style="left:645.45px;top:721.00px;font-size:18px;line-height:18px;color:#2e2e2e;letter-spacing:0.981px;">10.1…</div>
<div class="t" style="left:726.83px;top:721.00px;font-size:18px;line-height:18px;color:#2e2e2e;letter-spacing:1.220px;">00:00:00/00:01:00</div>
<div class="b" style="left:919.00px;top:727.70px;width:100.00px;height:4.20px;background:#b5eceb;"></div>
<div class="t" style="left:1028.83px;top:721.00px;font-size:18px;line-height:18px;color:#2e2e2e;letter-spacing:-0.105px;">0%</div>
<div class="t" style="left:1110.33px;top:721.00px;font-size:18px;line-height:18px;color:#2e2e2e;letter-spacing:1.126px;">00:00:00</div>
<svg class="i" style="left:1217.00px;top:717.80px" width="24" height="24" viewBox="0 0 24 24"><path fill="#0000b4" d="M9.64 7.64c.23-.5.36-1.05.36-1.64 0-2.21-1.79-4-4-4S2 3.79 2 6s1.79 4 4 4c.59 0 1.14-.13 1.64-.36L10 12l-2.36 2.36C7.14 14.13 6.59 14 6 14c-2.21 0-4 1.79-4 4s1.79 4 4 4 4-1.79 4-4c0-.59-.13-1.14-.36-1.64L12 14l7 7h3v-1L9.64 7.64zM6 8c-1.1 0-2-.89-2-2s.9-2 2-2 2 .89 2 2-.9 2-2 2zm0 12c-1.1 0-2-.89-2-2s.9-2 2-2 2 .89 2 2-.9 2-2 2zm6-7.5c-.28 0-.5-.22-.5-.5s.22-.5.5-.5.5.22.5.5-.22.5-.5.5zM19 3l-6 6 2 2 7-7V3z"/></svg>
<svg class="i" style="left:1257.00px;top:717.80px" width="24" height="24" viewBox="0 0 24 24"><path fill="#0000b4" d="M12 2C6.48 2 2 6.48 2 12s4.48 10 10 10 10-4.48 10-10S17.52 2 12 2zm-2 14.5v-9l6 4.5-6 4.5z"/></svg>
<svg class="i" style="left:1297.20px;top:717.80px" width="24" height="24" viewBox="0 0 24 24"><path fill="#0000b4" d="M6 19c0 1.1.9 2 2 2h8c1.1 0 2-.9 2-2V7H6v12zM19 4h-3.5l-1-1h-5l-1 1H5v2h14V4z"/></svg>
<div class="b" style="left:207.00px;top:801.92px;width:1135.00px;height:1.00px;background:#e2e2e6;"></div>
<svg class="i" style="left:210.30px;top:766.17px" width="24" height="24" viewBox="0 0 24 24"><path fill="#151515" d="M19 5v14H5V5h14m0-2H5c-1.1 0-2 .9-2 2v14c0 1.1.9 2 2 2h14c1.1 0 2-.9 2-2V5c0-1.1-.9-2-2-2z"/></svg>
<div class="t" style="left:240.20px;top:769.00px;font-size:18px;line-height:18px;color:#2e2e2e;letter-spacing:0.754px;">sound_wav_01.wav</div>
<div class="t" style="left:541.62px;top:769.00px;font-size:18px;line-height:18px;color:#2e2e2e;letter-spacing:0.998px;">00:01:30</div>
<div class="t" style="left:645.45px;top:769.00px;font-size:18px;line-height:18px;color:#2e2e2e;letter-spacing:0.981px;">15.1…</div>
<div class="t" style="left:726.83px;top:769.00px;font-size:18px;line-height:18px;color:#2e2e2e;letter-spacing:1.220px;">00:00:00/00:01:30</div>
<div class="b" style="left:919.00px;top:775.97px;width:100.00px;height:4.20px;background:#b5eceb;"></div>
<div class="t" style="left:1028.83px;top:769.00px;font-size:18px;line-height:18px;color:#2e2e2e;letter-spacing:-0.105px;">0%</div>
<div class="t" style="left:1110.33px;top:769.00px;font-size:18px;line-height:18px;color:#2e2e2e;letter-spacing:1.126px;">00:00:00</div>
<svg class="i" style="left:1217.00px;top:766.07px" width="24" height="24" viewBox="0 0 24 24"><path fill="#0000b4" d="M9.64 7.64c.23-.5.36-1.05.36-1.64 0-2.21-1.79-4-4-4S2 3.79 2 6s1.79 4 4 4c.59 0 1.14-.13 1.64-.36L10 12l-2.36 2.36C7.14 14.13 6.59 14 6 14c-2.21 0-4 1.79-4 4s1.79 4 4 4 4-1.79 4-4c0-.59-.13-1.14-.36-1.64L12 14l7 7h3v-1L9.64 7.64zM6 8c-1.1 0-2-.89-2-2s.9-2 2-2 2 .89 2 2-.9 2-2 2zm0 12c-1.1 0-2-.89-2-2s.9-2 2-2 2 .89 2 2-.9 2-2 2zm6-7.5c-.28 0-.5-.22-.5-.5s.22-.5.5-.5.5.22.5.5-.22.5-.5.5zM19 3l-6 6 2 2 7-7V3z"/></svg>
<svg class="i" style="left:1257.00px;top:766.07px" width="24" height="24" viewBox="0 0 24 24"><path fill="#0000b4" d="M12 2C6.48 2 2 6.48 2 12s4.48 10 10 10 10-4.48 10-10S17.52 2 12 2zm-2 14.5v-9l6 4.5-6 4.5z"/></svg>
<svg class="i" style="left:1297.20px;top:766.07px" width="24" height="24" viewBox="0 0 24 24"><path fill="#0000b4" d="M6 19c0 1.1.9 2 2 2h8c1.1 0 2-.9 2-2V7H6v12zM19 4h-3.5l-1-1h-5l-1 1H5v2h14V4z"/></svg>
<div class="b" style="left:207.00px;top:850.19px;width:1135.00px;height:1.00px;background:#e2e2e6;"></div>
<svg class="i" style="left:210.30px;top:814.44px" width="24" height="24" viewBox="0 0 24 24"><path fill="#151515" d="M19 5v14H5V5h14m0-2H5c-1.1 0-2 .9-2 2v14c0 1.1.9 2 2 2h14c1.1 0 2-.9 2-2V5c0-1.1-.9-2-2-2z"/></svg>
<div class="t" style="left:240.66px;top:817.00px;font-size:18px;line-height:18px;color:#2e2e2e;letter-spacing:0.677px;">video_avi_01.avi</div>
<div class="t" style="left:541.62px;top:817.00px;font-size:18px;line-height:18px;color:#2e2e2e;letter-spacing:1.004px;">01:05:48</div>
<div class="t" style="left:645.45px;top:817.00px;font-size:18px;line-height:18px;color:#2e2e2e;letter-spacing:1.855px;">101…</div>
<div class="t" style="left:726.83px;top:817.00px;font-size:18px;line-height:18px;color:#2e2e2e;letter-spacing:1.223px;">00:00:00/01:05:48</div>
<div class="b" style="left:919.00px;top:824.24px;width:100.00px;height:4.20px;background:#b5eceb;"></div>
<div class="t" style="left:1028.83px;top:817.00px;font-size:18px;line-height:18px;color:#2e2e2e;letter-spacing:-0.105px;">0%</div>
<div class="t" style="left:1110.33px;top:817.00px;font-size:18px;line-height:18px;color:#2e2e2e;letter-spacing:1.126px;">00:00:00</div>
<svg class="i" style="left:1217.00px;top:814.34px" width="24" height="24" viewBox="0 0 24 24"><path fill="#0000b4" d="M9.64 7.64c.23-.5.36-1.05.36-1.64 0-2.21-1.79-4-4-4S2 3.79 2 6s1.79 4 4 4c.59 0 1.14-.13 1.64-.36L10 12l-2.36 2.36C7.14 14.13 6.59 14 6 14c-2.21 0-4 1.79-4 4s1.79 4 4 4 4-1.79 4-4c0-.59-.13-1.14-.36-1.64L12 14l7 7h3v-1L9.64 7.64zM6 8c-1.1 0-2-.89-2-2s.9-2 2-2 2 .89 2 2-.9 2-2 2zm0 12c-1.1 0-2-.89-2-2s.9-2 2-2 2 .89 2 2-.9 2-2 2zm6-7.5c-.28 0-.5-.22-.5-.5s.22-.5.5-.5.5.22.5.5-.22.5-.5.5zM19 3l-6 6 2 2 7-7V3z"/></svg>
<svg class="i" style="left:1257.00px;top:814.34px" width="24" height="24" viewBox="0 0 24 24"><path fill="#0000b4" d="M12 2C6.48 2 2 6.48 2 12s4.48 10 10 10 10-4.48 10-10S17.52 2 12 2zm-2 14.5v-9l6 4.5-6 4.5z"/></svg>
<svg class="i" style="left:1297.20px;top:814.34px" width="24" height="24" viewBox="0 0 24 24"><path fill="#0000b4" d="M6 19c0 1.1.9 2 2 2h8c1.1 0 2-.9 2-2V7H6v12zM19 4h-3.5l-1-1h-5l-1 1H5v2h14V4z"/></svg>
<div class="b" style="left:207.00px;top:898.46px;width:1135.00px;height:1.00px;background:#e2e2e6;"></div>
<svg class="i" style="left:210.30px;top:862.71px" width="24" height="24" viewBox="0 0 24 24"><path fill="#151515" d="M19 5v14H5V5h14m0-2H5c-1.1 0-2 .9-2 2v14c0 1.1.9 2 2 2h14c1.1 0 2-.9 2-2V5c0-1.1-.9-2-2-2z"/></svg>
<div class="t" style="left:240.66px;top:866.00px;font-size:18px;line-height:18px;color:#2e2e2e;letter-spacing:0.930px;">video_mp4_02.mp4</div>
<div class="t" style="left:541.62px;top:866.00px;font-size:18px;line-height:18px;color:#2e2e2e;letter-spacing:1.017px;">00:02:59</div>
<div class="t" style="left:645.99px;top:866.00px;font-size:18px;line-height:18px;color:#2e2e2e;letter-spacing:0.484px;">9.8MB</div>
<div class="t" style="left:726.83px;top:866.00px;font-size:18px;line-height:18px;color:#2e2e2e;letter-spacing:1.229px;">00:00:00/00:02:59</div>
<div class="b" style="left:919.00px;top:872.51px;width:100.00px;height:4.20px;background:#b5eceb;"></div>
<div class="t" style="left:1028.83px;top:866.00px;font-size:18px;line-height:18px;color:#2e2e2e;letter-spacing:-0.105px;">0%</div>
<div class="t" style="left:1110.33px;top:866.00px;font-size:18px;line-height:18px;color:#2e2e2e;letter-spacing:1.126px;">00:00:00</div>
<svg class="i" style="left:1217.00px;top:862.61px" width="24" height="24" viewBox="0 0 24 24"><path fill="#0000b4" d="M9.64 7.64c.23-.5.36-1.05.36-1.64 0-2.21-1.79-4-4-4S2 3.79 2 6s1.79 4 4 4c.59 0 1.14-.13 1.64-.36L10 12l-2.36 2.36C7.14 14.13 6.59 14 6 14c-2.21 0-4 1.79-4 4s1.79 4 4 4 4-1.79 4-4c0-.59-.13-1.14-.36-1.64L12 14l7 7h3v-1L9.64 7.64zM6 8c-1.1 0-2-.89-2-2s.9-2 2-2 2 .89 2 2-.9 2-2 2zm0 12c-1.1 0-2-.89-2-2s.9-2 2-2 2 .89 2 2-.9 2-2 2zm6-7.5c-.28 0-.5-.22-.5-.5s.22-.5.5-.5.5.22.5.5-.22.5-.5.5zM19 3l-6 6 2 2 7-7V3z"/></svg>
<svg class="i" style="left:1257.00px;top:862.61px" width="24" height="24" viewBox="0 0 24 24"><path fill="#0000b4" d="M12 2C6.48 2 2 6.48 2 12s4.48 10 10 10 10-4.48 10-10S17.52 2 12 2zm-2 14.5v-9l6 4.5-6 4.5z"/></svg>
<svg class="i" style="left:1297.20px;top:862.61px" width="24" height="24" viewBox="0 0 24 24"><path fill="#0000b4" d="M6 19c0 1.1.9 2 2 2h8c1.1 0 2-.9 2-2V7H6v12zM19 4h-3.5l-1-1h-5l-1 1H5v2h14V4z"/></svg>
<div class="b" style="left:207.00px;top:946.73px;width:1135.00px;height:1.00px;background:#e2e2e6;"></div>
<svg class="i" style="left:210.30px;top:910.98px" width="24" height="24" viewBox="0 0 24 24"><path fill="#151515" d="M19 5v14H5V5h14m0-2H5c-1.1 0-2 .9-2 2v14c0 1.1.9 2 2 2h14c1.1 0 2-.9 2-2V5c0-1.1-.9-2-2-2z"/></svg>
<div class="t" style="left:240.66px;top:914.00px;font-size:18px;line-height:18px;color:#2e2e2e;letter-spacing:0.930px;">video_mp4_05.mp4</div>
<div class="t" style="left:541.62px;top:914.00px;font-size:18px;line-height:18px;color:#2e2e2e;letter-spacing:1.017px;">00:02:59</div>
<div class="t" style="left:645.99px;top:914.00px;font-size:18px;line-height:18px;color:#2e2e2e;letter-spacing:0.484px;">9.8MB</div>
<div class="t" style="left:726.83px;top:914.00px;font-size:18px;line-height:18px;color:#2e2e2e;letter-spacing:1.229px;">00:00:00/00:02:59</div>
<div class="b" style="left:919.00px;top:920.78px;width:100.00px;height:4.20px;background:#b5eceb;"></div>
<div class="t" style="left:1028.83px;top:914.00px;font-size:18px;line-height:18px;color:#2e2e2e;letter-spacing:-0.105px;">0%</div>
<div class="t" style="left:1110.33px;top:914.00px;font-size:18px;line-height:18px;color:#2e2e2e;letter-spacing:1.126px;">00:00:00</div>
<svg class="i" style="left:1217.00px;top:910.88px" width="24" height="24" viewBox="0 0 24 24"><path fill="#0000b4" d="M9.64 7.64c.23-.5.36-1.05.36-1.64 0-2.21-1.79-4-4-4S2 3.79 2 6s1.79 4 4 4c.59 0 1.14-.13 1.64-.36L10 12l-2.36 2.36C7.14 14.13 6.59 14 6 14c-2.21 0-4 1.79-4 4s1.79 4 4 4 4-1.79 4-4c0-.59-.13-1.14-.36-1.64L12 14l7 7h3v-1L9.64 7.64zM6 8c-1.1 0-2-.89-2-2s.9-2 2-2 2 .89 2 2-.9 2-2 2zm0 12c-1.1 0-2-.89-2-2s.9-2 2-2 2 .89 2 2-.9 2-2 2zm6-7.5c-.28 0-.5-.22-.5-.5s.22-.5.5-.5.5.22.5.5-.22.5-.5.5zM19 3l-6 6 2 2 7-7V3z"/></svg>
<svg class="i" style="left:1257.00px;top:910.88px" width="24" height="24" viewBox="0 0 24 24"><path fill="#0000b4" d="M12 2C6.48 2 2 6.48 2 12s4.48 10 10 10 10-4.48 10-10S17.52 2 12 2zm-2 14.5v-9l6 4.5-6 4.5z"/></svg>
<svg class="i" style="left:1297.20px;top:910.88px" width="24" height="24" viewBox="0 0 24 24"><path fill="#0000b4" d="M6 19c0 1.1.9 2 2 2h8c1.1 0 2-.9 2-2V7H6v12zM19 4h-3.5l-1-1h-5l-1 1H5v2h14V4z"/></svg>
<div class="b" style="left:207.00px;top:995.00px;width:1135.00px;height:1.00px;background:#e2e2e6;"></div>
<svg class="i" style="left:210.30px;top:959.25px" width="24" height="24" viewBox="0 0 24 24"><path fill="#151515" d="M19 5v14H5V5h14m0-2H5c-1.1 0-2 .9-2 2v14c0 1.1.9 2 2 2h14c1.1 0 2-.9 2-2V5c0-1.1-.9-2-2-2z"/></svg>
<div class="t" style="left:240.66px;top:962.00px;font-size:18px;line-height:18px;color:#2e2e2e;letter-spacing:1.201px;">video_webm_03.webm</div>
<div class="t" style="left:541.62px;top:962.00px;font-size:18px;line-height:18px;color:#2e2e2e;letter-spacing:1.004px;">01:05:48</div>
<div class="t" style="left:645.90px;top:962.00px;font-size:18px;line-height:18px;color:#2e2e2e;letter-spacing:1.294px;">664.…</div>
<div class="t" style="left:726.83px;top:962.00px;font-size:18px;line-height:18px;color:#2e2e2e;letter-spacing:1.223px;">00:00:00/01:05:48</div>
<div class="b" style="left:919.00px;top:969.05px;width:100.00px;height:4.20px;background:#b5eceb;"></div>
<div class="t" style="left:1028.83px;top:962.00px;font-size:18px;line-height:18px;color:#2e2e2e;letter-spacing:-0.105px;">0%</div>
<div class="t" style="left:1110.33px;top:962.00px;font-size:18px;line-height:18px;color:#2e2e2e;letter-spacing:1.126px;">00:00:00</div>
<svg class="i" style="left:1217.00px;top:959.15px" width="24" height="24" viewBox="0 0 24 24"><path fill="#0000b4" d="M9.64 7.64c.23-.5.36-1.05.36-1.64 0-2.21-1.79-4-4-4S2 3.79 2 6s1.79 4 4 4c.59 0 1.14-.13 1.64-.36L10 12l-2.36 2.36C7.14 14.13 6.59 14 6 14c-2.21 0-4 1.79-4 4s1.79 4 4 4 4-1.79 4-4c0-.59-.13-1.14-.36-1.64L12 14l7 7h3v-1L9.64 7.64zM6 8c-1.1 0-2-.89-2-2s.9-2 2-2 2 .89 2 2-.9 2-2 2zm0 12c-1.1 0-2-.89-2-2s.9-2 2-2 2 .89 2 2-.9 2-2 2zm6-7.5c-.28 0-.5-.22-.5-.5s.22-.5.5-.5.5.22.5.5-.22.5-.5.5zM19 3l-6 6 2 2 7-7V3z"/></svg>
<svg class="i" style="left:1257.00px;top:959.15px" width="24" height="24" viewBox="0 0 24 24"><path fill="#0000b4" d="M12 2C6.48 2 2 6.48 2 12s4.48 10 10 10 10-4.48 10-10S17.52 2 12 2zm-2 14.5v-9l6 4.5-6 4.5z"/></svg>
<svg class="i" style="left:1297.20px;top:959.15px" width="24" height="24" viewBox="0 0 24 24"><path fill="#0000b4" d="M6 19c0 1.1.9 2 2 2h8c1.1 0 2-.9 2-2V7H6v12zM19 4h-3.5l-1-1h-5l-1 1H5v2h14V4z"/></svg>
</div></div>
<div class="b" style="left:1360.00px;top:112.60px;width:352.00px;height:35.00px;background:#f1f1fa;box-shadow:0 1.7px 1.3px rgba(140,125,200,.8),0 0 1.5px rgba(140,130,190,.4);"></div>
<svg class="i" style="left:1360.25px;top:120.05px" width="20.5" height="20.5" viewBox="0 0 24 24"><path fill="#0000b4" d="M11 2v20c-5.07-.5-9-4.79-9-10s3.93-9.5 9-10zm2.03 0v8.99H22c-.47-4.74-4.24-8.52-8.97-8.99zm0 11.01V22c4.74-.47 8.5-4.25 8.97-8.99h-8.97z"/></svg>
<div class="t" style="left:1390.80px;top:120.00px;font-size:20px;line-height:20px;color:#2e2e2e;letter-spacing:0.920px;">Total&nbsp;Files:&nbsp;&nbsp;17</div>
<div class="b" style="left:1359.50px;top:375.00px;width:353.00px;height:9.00px;background:#fafafb;"></div>
<div class="b" style="left:1359.50px;top:592.00px;width:353.00px;height:9.00px;background:#fafafb;"></div>
<div class="b" style="left:1360.00px;top:166.40px;width:352.00px;height:207.20px;background:linear-gradient(180deg,#f7f7fc 0px,#f1f1fa 2.2px);"></div>
<div class="b" style="left:1359.10px;top:167.50px;width:1.00px;height:206.10px;background:linear-gradient(180deg,rgba(200,194,228,0),#cbc5e6 4px);"></div>
<div class="b" style="left:1711.90px;top:167.50px;width:1.00px;height:206.10px;background:linear-gradient(180deg,rgba(200,194,228,0),#cbc5e6 4px);"></div>
<div class="b" style="left:1359.50px;top:373.40px;width:353.00px;height:1.60px;background:#bcb2e0;"></div>
<div class="b" style="left:1360.00px;top:383.20px;width:352.00px;height:207.70px;background:linear-gradient(180deg,#f7f7fc 0px,#f1f1fa 2.2px);"></div>
<div class="b" style="left:1359.10px;top:384.50px;width:1.00px;height:206.40px;background:linear-gradient(180deg,rgba(200,194,228,0),#cbc5e6 4px);"></div>
<div class="b" style="left:1711.90px;top:384.50px;width:1.00px;height:206.40px;background:linear-gradient(180deg,rgba(200,194,228,0),#cbc5e6 4px);"></div>
<div class="b" style="left:1359.50px;top:590.80px;width:353.00px;height:1.60px;background:#bcb2e0;"></div>
<div class="b" style="left:1360.00px;top:603.00px;width:352.00px;height:362.80px;box-shadow:0 2.2px 3.5px -0.6px rgba(80,60,160,.8),0 0 1.8px rgba(140,130,190,.5);"></div>
<div class="b" style="left:1357.00px;top:596.00px;width:358.00px;height:7.20px;background:linear-gradient(180deg,#fafafb 0px,#fafafb 4px,rgba(250,250,251,0) 7.2px);"></div>
<div class="b" style="left:1360.00px;top:600.20px;width:352.00px;height:365.60px;background:linear-gradient(180deg,#f7f7fc 0px,#f1f1fa 2.2px);"></div>
<svg class="i" style="left:1360.30px;top:167.60px" width="24" height="24" viewBox="0 0 24 24"><path fill="#0000b4" d="M12 2C6.48 2 2 6.48 2 12s4.48 10 10 10 10-4.48 10-10S17.52 2 12 2zm1 15h-2v-6h2v6zm0-8h-2V7h2v2z"/></svg>
<div class="t" style="left:1395.30px;top:171.00px;font-size:18px;line-height:18px;color:#2e2e2e;letter-spacing:1.064px;">Audio&nbsp;Info</div>
<div class="t" style="left:1375.76px;top:212.00px;font-size:18px;line-height:18px;color:#2e2e2e;letter-spacing:1.114px;">File&nbsp;Name:</div>
<div class="t" style="left:1477.23px;top:212.00px;font-size:18px;line-height:18px;color:#2e2e2e;letter-spacing:1.177px;">audio_mp3_01</div>
<div class="t" style="left:1376.39px;top:257.00px;font-size:18px;line-height:18px;color:#2e2e2e;letter-spacing:1.266px;">Sampling&nbsp;Rate:</div>
<div class="t" style="left:1518.30px;top:257.00px;font-size:18px;line-height:18px;color:#2e2e2e;letter-spacing:0.401px;">44.1&nbsp;kHz</div>
<div class="t" style="left:1375.76px;top:303.00px;font-size:18px;line-height:18px;color:#2e2e2e;letter-spacing:1.016px;">Bit&nbsp;Rate:</div>
<div class="t" style="left:1455.60px;top:303.00px;font-size:18px;line-height:18px;color:#2e2e2e;letter-spacing:1.164px;">64&nbsp;kbps</div>
<div class="t" style="left:1376.30px;top:348.00px;font-size:18px;line-height:18px;color:#2e2e2e;letter-spacing:1.259px;">Channels:</div>
<div class="t" style="left:1470.65px;top:348.00px;font-size:18px;line-height:18px;color:#2e2e2e;">1</div>
<div class="b" style="left:1361.20px;top:387.70px;width:22.40px;height:18.10px;background:#0000b4;border-radius:2.5px;"></div>
<div class="b" style="left:1363.20px;top:389.80px;width:9.00px;height:2.00px;background:#fff;"></div>
<div class="b" style="left:1363.20px;top:393.80px;width:9.00px;height:2.00px;background:#fff;"></div>
<div class="t" style="left:1393.86px;top:388.00px;font-size:18px;line-height:18px;color:#2e2e2e;letter-spacing:0.540px;">Results</div>
<div class="t" style="left:1377.20px;top:429.00px;font-size:18px;line-height:18px;color:#2e2e2e;letter-spacing:1.571px;">Audio</div>
<svg class="i" style="left:1605.50px;top:426.05px" width="24" height="24" viewBox="0 0 24 24"><path fill="#111" d="M20 6h-8l-2-2H4c-1.1 0-1.99.9-1.99 2L2 18c0 1.1.9 2 2 2h16c1.1 0 2-.9 2-2V8c0-1.1-.9-2-2-2zm0 12H4V8h16v10z"/></svg>
<svg class="i" style="left:1655.90px;top:426.05px" width="24" height="24" viewBox="0 0 24 24"><path fill="#111" d="M12 2C6.48 2 2 6.48 2 12s4.48 10 10 10 10-4.48 10-10S17.52 2 12 2zm-2 14.5v-9l6 4.5-6 4.5z"/></svg>
<div class="t" style="left:1375.76px;top:474.00px;font-size:18px;line-height:18px;color:#2e2e2e;letter-spacing:1.636px;">Dialogue</div>
<svg class="i" style="left:1605.50px;top:471.05px" width="24" height="24" viewBox="0 0 24 24"><path fill="#111" d="M20 6h-8l-2-2H4c-1.1 0-1.99.9-1.99 2L2 18c0 1.1.9 2 2 2h16c1.1 0 2-.9 2-2V8c0-1.1-.9-2-2-2zm0 12H4V8h16v10z"/></svg>
<svg class="i" style="left:1655.90px;top:471.05px" width="24" height="24" viewBox="0 0 24 24"><path fill="#111" d="M12 2C6.48 2 2 6.48 2 12s4.48 10 10 10 10-4.48 10-10S17.52 2 12 2zm-2 14.5v-9l6 4.5-6 4.5z"/></svg>
<div class="t" style="left:1375.76px;top:519.00px;font-size:18px;line-height:18px;color:#2e2e2e;letter-spacing:1.166px;">Music</div>
<svg class="i" style="left:1605.50px;top:516.55px" width="24" height="24" viewBox="0 0 24 24"><path fill="#111" d="M20 6h-8l-2-2H4c-1.1 0-1.99.9-1.99 2L2 18c0 1.1.9 2 2 2h16c1.1 0 2-.9 2-2V8c0-1.1-.9-2-2-2zm0 12H4V8h16v10z"/></svg>
<svg class="i" style="left:1655.90px;top:516.55px" width="24" height="24" viewBox="0 0 24 24"><path fill="#111" d="M12 2C6.48 2 2 6.48 2 12s4.48 10 10 10 10-4.48 10-10S17.52 2 12 2zm-2 14.5v-9l6 4.5-6 4.5z"/></svg>
<div class="t" style="left:1375.76px;top:564.00px;font-size:18px;line-height:18px;color:#2e2e2e;letter-spacing:0.949px;">Effects</div>
<svg class="i" style="left:1605.50px;top:561.55px" width="24" height="24" viewBox="0 0 24 24"><path fill="#111" d="M20 6h-8l-2-2H4c-1.1 0-1.99.9-1.99 2L2 18c0 1.1.9 2 2 2h16c1.1 0 2-.9 2-2V8c0-1.1-.9-2-2-2zm0 12H4V8h16v10z"/></svg>
<svg class="i" style="left:1655.90px;top:561.55px" width="24" height="24" viewBox="0 0 24 24"><path fill="#111" d="M12 2C6.48 2 2 6.48 2 12s4.48 10 10 10 10-4.48 10-10S17.52 2 12 2zm-2 14.5v-9l6 4.5-6 4.5z"/></svg>
<svg class="i" style="left:1359.90px;top:602.00px" width="24" height="24" viewBox="0 0 24 24"><path fill="#0000b4" d="M19.14 12.94c.04-.3.06-.61.06-.94 0-.32-.02-.64-.07-.94l2.03-1.58c.18-.14.23-.41.12-.61l-1.92-3.32c-.12-.22-.37-.29-.59-.22l-2.39.96c-.5-.38-1.03-.7-1.62-.94l-.36-2.54c-.04-.24-.24-.41-.48-.41h-3.84c-.24 0-.43.17-.47.41l-.36 2.54c-.59.24-1.13.57-1.62.94l-2.39-.96c-.22-.08-.47 0-.59.22L2.74 8.87c-.12.21-.08.47.12.61l2.03 1.58c-.05.3-.09.63-.09.94s.02.64.07.94l-2.03 1.58c-.18.14-.23.41-.12.61l1.92 3.32c.12.22.37.29.59.22l2.39-.96c.5.38 1.03.7 1.62.94l.36 2.54c.05.24.24.41.48.41h3.84c.24 0 .44-.17.47-.41l.36-2.54c.59-.24 1.13-.56 1.62-.94l2.39.96c.22.08.47 0 .59-.22l1.92-3.32c.12-.22.07-.47-.12-.61l-2.01-1.58zM12 15.6c-1.98 0-3.6-1.62-3.6-3.6s1.62-3.6 3.6-3.6 3.6 1.62 3.6 3.6-1.62 3.6-3.6 3.6z"/></svg>
<div class="t" style="left:1394.49px;top:605.00px;font-size:18px;line-height:18px;color:#2e2e2e;letter-spacing:0.859px;">Settings</div>
<div class="t" style="left:1376.39px;top:642.00px;font-size:18px;line-height:18px;color:#2e2e2e;letter-spacing:1.422px;">Output&nbsp;Format:</div>
<svg class="i" style="left:1374px;top:661.60px" width="316" height="39" viewBox="0 0 316 39"><rect x="2.25" y="2.85" width="311.300" height="33" rx="4.500" fill="none" stroke="#3c3c40" stroke-width="1.700"/><path d="M291.700 17.200H302.500L297.100 22.800Z" fill="#555"/></svg>
<div class="t" style="left:1381.16px;top:673.00px;font-size:18px;line-height:18px;color:#262626;letter-spacing:-0.442px;">MP3</div>
<div class="t" style="left:1376.39px;top:715.00px;font-size:18px;line-height:18px;color:#2e2e2e;letter-spacing:1.278px;">Output&nbsp;Directory:</div>
<svg class="i" style="left:1374px;top:734.95px" width="316" height="39" viewBox="0 0 316 39"><rect x="2.25" y="2.85" width="311.300" height="33" rx="4.500" fill="none" stroke="#3c3c40" stroke-width="1.700"/><path d="M291.700 17.200H302.500L297.100 22.800Z" fill="#555"/></svg>
<div class="t" style="left:1381.16px;top:746.00px;font-size:18px;line-height:18px;color:#262626;letter-spacing:0.112px;">Default&nbsp;Directory</div>
<div class="t" style="left:1376.30px;top:789.00px;font-size:18px;line-height:18px;color:#2e2e2e;letter-spacing:0.841px;">Clip&nbsp;Size:</div>
<svg class="i" style="left:1374px;top:808.30px" width="316" height="39" viewBox="0 0 316 39"><rect x="2.25" y="2.85" width="311.300" height="33" rx="4.500" fill="#ebebef" stroke="#3c3c40" stroke-width="1.700"/><path d="M291.700 17.200H302.500L297.100 22.800Z" fill="#555"/></svg>
<div class="t" style="left:1381.25px;top:820.00px;font-size:18px;line-height:18px;color:#262626;letter-spacing:0.170px;">10&nbsp;min&nbsp;(medium&nbsp;memory)</div>
<div class="t" style="left:1375.76px;top:862.00px;font-size:18px;line-height:18px;color:#2e2e2e;letter-spacing:1.852px;">Muxing:</div>
<svg class="i" style="left:1374px;top:881.65px" width="316" height="39" viewBox="0 0 316 39"><rect x="2.25" y="2.85" width="311.300" height="33" rx="4.500" fill="none" stroke="#3c3c40" stroke-width="1.700"/><path d="M291.700 17.200H302.500L297.100 22.800Z" fill="#555"/></svg>
<div class="t" style="left:1381.16px;top:893.00px;font-size:18px;line-height:18px;color:#262626;letter-spacing:-0.154px;">Disable</div>
<div class="t" style="left:1376.58px;top:940.00px;font-size:16.5px;line-height:16.5px;color:#2e2e2e;letter-spacing:0.699px;">GPU</div>
<div class="b" style="left:1645.70px;top:937.60px;width:39.00px;height:22.40px;background:#0000b4;border-radius:11.2px;"></div>
<div class="b" style="left:1664.30px;top:939.90px;width:17.80px;height:17.80px;background:#fff;border-radius:50%;"></div>
<svg class="i" style="left:213.00px;top:986.70px" width="24" height="24" viewBox="0 0 24 24"><path fill="#0000b4" d="M18 8h-1V6c0-2.76-2.24-5-5-5S7 3.24 7 6v2H6c-1.1 0-2 .9-2 2v10c0 1.1.9 2 2 2h12c1.1 0 2-.9 2-2V10c0-1.1-.9-2-2-2zm-6 9c-1.1 0-2-.9-2-2s.9-2 2-2 2 .9 2 2-.9 2-2 2zm3.1-9H8.9V6c0-1.71 1.39-3.1 3.1-3.1 1.71 0 3.1 1.39 3.1 3.1v2z"/></svg>
<div class="t" style="left:244.50px;top:991.00px;font-size:17px;line-height:17px;color:#1b1b9b;letter-spacing:1.170px;">Activate</div>
<div class="b" style="left:325.70px;top:981.00px;width:109.30px;height:31.00px;background:#ececf3;"></div>
<svg class="i" style="left:340.70px;top:987.30px" width="24" height="24" viewBox="0 0 24 24"><path fill="#14148a" d="M13 7h9v2h-9zM13 15h9v2h-9zM16 11h6v2h-6zM13 12L8 7v4H2v2h6v4z"/></svg>
<div class="t" style="left:376.54px;top:991.00px;font-size:17px;line-height:17px;color:#1b1b9b;letter-spacing:1.722px;">More</div>
<div class="t" style="left:615.86px;top:991.00px;font-size:17px;line-height:17px;color:#1b1b9b;letter-spacing:1.507px;">Trial&nbsp;period&nbsp;until</div>
<div class="t" style="left:771.05px;top:991.00px;font-size:17px;line-height:17px;color:#1b1b9b;letter-spacing:1.382px;">2025-07-01&nbsp;23:07:54</div>
<div class="t" style="left:955.51px;top:991.00px;font-size:17px;line-height:17px;color:#1b1b9b;">|</div>
<div class="t" style="left:965.16px;top:991.00px;font-size:17px;line-height:17px;color:#1b1b9b;letter-spacing:0.839px;">v1.2.0</div>
<div class="t" style="left:1018.61px;top:991.00px;font-size:17px;line-height:17px;color:#1b1b9b;">|</div>
<div class="t" style="left:1028.24px;top:991.00px;font-size:17px;line-height:17px;color:#1b1b9b;letter-spacing:1.081px;">©2025&nbsp;LyRuno-CDX.</div>
<div class="t" style="left:1428.55px;top:991.00px;font-size:17px;line-height:17px;color:#1b1b9b;letter-spacing:0.633px;">CPU:&nbsp;48%&nbsp;|&nbsp;Mem:&nbsp;50%&nbsp;|&nbsp;GPU:&nbsp;66%</div>
</div></body></html>
